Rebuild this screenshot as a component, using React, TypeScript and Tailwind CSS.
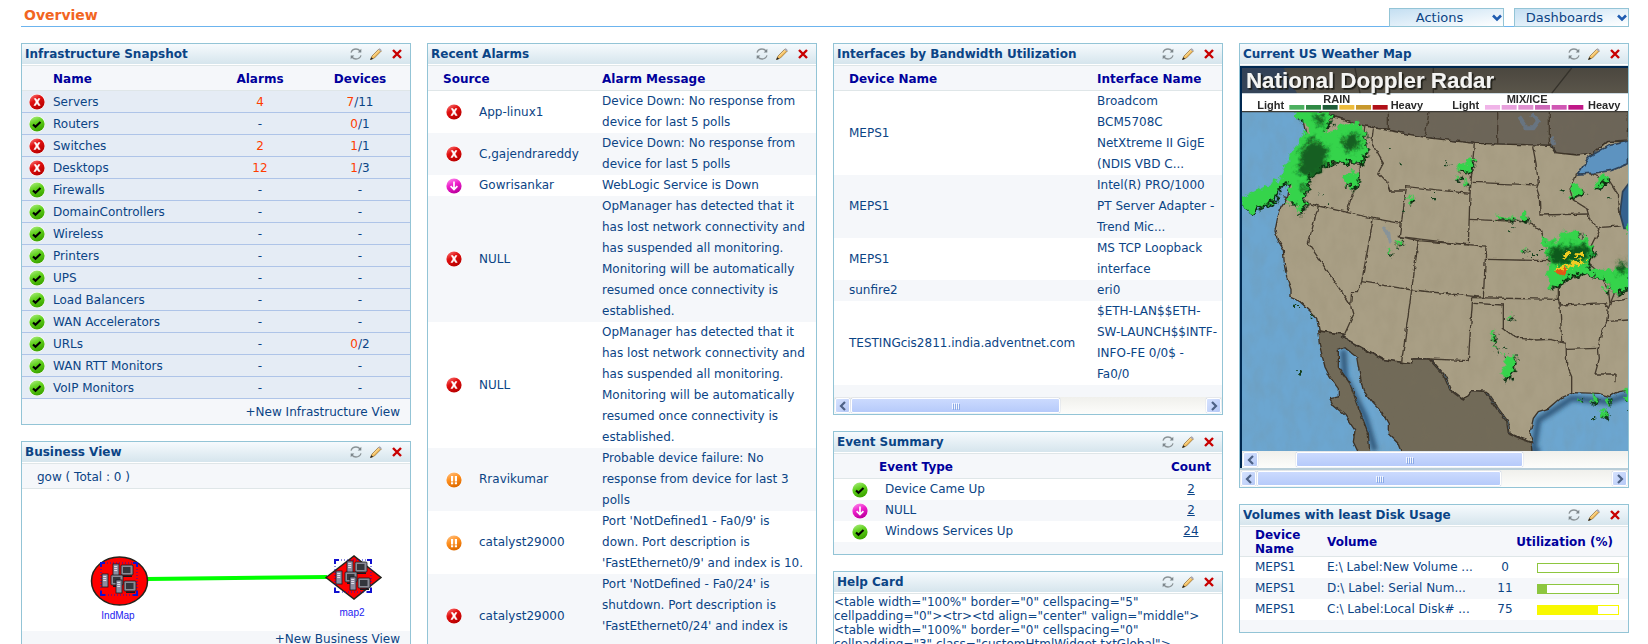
import type { ReactNode } from "react";

type Status = "critical" | "clear" | "trouble" | "attention";

const infrastructure: { name: string; status: Status; alarms?: number; down?: number; total?: number }[] = [
  { name: "Servers", status: "critical", alarms: 4, down: 7, total: 11 },
  { name: "Routers", status: "clear", down: 0, total: 1 },
  { name: "Switches", status: "critical", alarms: 2, down: 1, total: 1 },
  { name: "Desktops", status: "critical", alarms: 12, down: 1, total: 3 },
  { name: "Firewalls", status: "clear" },
  { name: "DomainControllers", status: "clear" },
  { name: "Wireless", status: "clear" },
  { name: "Printers", status: "clear" },
  { name: "UPS", status: "clear" },
  { name: "Load Balancers", status: "clear" },
  { name: "WAN Accelerators", status: "clear" },
  { name: "URLs", status: "clear", down: 0, total: 2 },
  { name: "WAN RTT Monitors", status: "clear" },
  { name: "VoIP Monitors", status: "clear" },
];

const agentLost =
  "OpManager has detected that it has lost network connectivity and has suspended all monitoring. Monitoring will be automatically resumed once connectivity is established.";

const alarms: { source: string; status: Status; message: string }[] = [
  { source: "App-linux1", status: "critical", message: "Device Down: No response from device for last 5 polls" },
  { source: "C,gajendrareddy", status: "critical", message: "Device Down: No response from device for last 5 polls" },
  { source: "Gowrisankar", status: "trouble", message: "WebLogic Service is Down" },
  { source: "NULL", status: "critical", message: agentLost },
  { source: "NULL", status: "critical", message: agentLost },
  { source: "Rravikumar", status: "attention", message: "Probable device failure: No response from device for last 3 polls" },
  {
    source: "catalyst29000",
    status: "attention",
    message: "Port 'NotDefined1 - Fa0/9' is\ndown. Port description is\n'FastEthernet0/9' and index is 10.",
  },
  {
    source: "catalyst29000",
    status: "critical",
    message: "Port 'NotDefined - Fa0/24' is\nshutdown. Port description is\n'FastEthernet0/24' and index is",
  },
];

const interfaces = [
  { device: "MEPS1", name: "Broadcom\nBCM5708C\nNetXtreme II GigE\n(NDIS VBD C..." },
  { device: "MEPS1", name: "Intel(R) PRO/1000\nPT Server Adapter -\nTrend Mic..." },
  { device: "MEPS1", name: "MS TCP Loopback\ninterface" },
  { device: "sunfire2", name: "eri0" },
  { device: "TESTINGcis2811.india.adventnet.com", name: "$ETH-LAN$$ETH-\nSW-LAUNCH$$INTF-\nINFO-FE 0/0$ -\nFa0/0" },
];

const events: { type: string; status: Status; count: number }[] = [
  { type: "Device Came Up", status: "clear", count: 2 },
  { type: "NULL", status: "trouble", count: 2 },
  { type: "Windows Services Up", status: "clear", count: 24 },
];

const volumes = [
  { device: "MEPS1", volume: "E:\\ Label:New Volume ...", used: 0 },
  { device: "MEPS1", volume: "D:\\ Label: Serial Num...", used: 11 },
  { device: "MEPS1", volume: "C:\\ Label:Local Disk# ...", used: 75 },
];

const th = "text-[12px] leading-4 font-bold text-[#00009c]";
const headRow = "h-[25px] bg-[#f5f7fa] shadow-[inset_0_-1px_0_#dfe6e8]";

function SharedDefs() {
  return (
    <svg className="absolute h-0 w-0" aria-hidden="true">
      <defs>
        <linearGradient id="critical" x1="0" y1="0" x2="0.6" y2="1">
          <stop offset="0" stopColor="#ff8a8a" />
          <stop offset="0.45" stopColor="#e01010" />
          <stop offset="1" stopColor="#b80000" />
        </linearGradient>
        <linearGradient id="clear" x1="0" y1="0" x2="0.4" y2="1">
          <stop offset="0" stopColor="#b6f08c" />
          <stop offset="0.5" stopColor="#5fd01c" />
          <stop offset="1" stopColor="#3ea800" />
        </linearGradient>
        <linearGradient id="trouble" x1="0" y1="0" x2="0.4" y2="1">
          <stop offset="0" stopColor="#ff9cf0" />
          <stop offset="0.5" stopColor="#ee22cc" />
          <stop offset="1" stopColor="#c000a0" />
        </linearGradient>
        <linearGradient id="attention" x1="0" y1="0" x2="0.4" y2="1">
          <stop offset="0" stopColor="#ffc890" />
          <stop offset="0.5" stopColor="#ff9020" />
          <stop offset="1" stopColor="#e06c00" />
        </linearGradient>
      </defs>
    </svg>
  );
}

function StatusIcon({ status }: { status: Status }) {
  return (
    <svg className="inline-block h-4 w-4 align-middle" viewBox="0 0 16 16" role="img" aria-label={status}>
      <circle cx="8" cy="8" r="8" fill="#fff" />
      <circle cx="8" cy="8" r="7.6" fill={`url(#${status})`} />
      {status === "critical" && (
        <path d="M5.3 4.6h1.6l1.2 2 1.3-2h1.500L9 7.900l2.200 3.500H9.500L8 9.200l-1.500 2.200H4.900L7.100 8z" fill="#fff" stroke="#fff" strokeWidth=".6" />
      )}
      {status === "clear" && <path d="M4 8.400 6.500 10.800l5-4.800" fill="none" stroke="#000" strokeWidth="2.1" />}
      {status === "trouble" && <path d="M8 3.600v7.600M4.600 8.200 8 11.600l3.400-3.400" fill="none" stroke="#fff" strokeWidth="1.700" />}
      {status === "attention" && (
        <path d="M5 4h2.200v5.400H5zM5 10.200h2.200v2H5zM8.800 4H11v5.400H8.800zM8.800 10.200H11v2H8.800z" fill="#fff" />
      )}
    </svg>
  );
}

function RefreshIcon() {
  return (
    <svg className="h-3 w-3" viewBox="0 0 12 12" fill="none" stroke="#8a9296" strokeWidth="1.3">
      <path d="M1 4.600C1.800 2.200 3.600 1 6 1c1.700 0 3 .6 4.200 2M11 7.400C10.200 9.800 8.400 11 6 11c-1.700 0-3-.6-4.200-2" />
      <path d="M11.300.8v3.600H7.700zM.7 11.200V7.600h3.600z" fill="#7b858a" stroke="none" />
    </svg>
  );
}

function PencilIcon() {
  return (
    <svg className="h-3 w-3" viewBox="0 0 12 12">
      <path d="M.5 11.600 2 8 9 .9l2.400 2L4.400 10z" fill="#f4bd5c" stroke="#8d6a33" strokeWidth=".7" />
      <path d="m3 8.400 6.600-6.600" stroke="#ffe6a8" strokeWidth="1" />
      <path d="M8.300 1.500 9.300.5c.6-.5 2.600 1.100 2.100 2l-.9 1z" fill="#a9a9b8" />
      <path d="M.2 11.900 1.200 9.200l2 1.600z" fill="#222" />
    </svg>
  );
}

function CloseIcon() {
  return (
    <svg className="h-2.5 w-2.5" viewBox="0 0 10 10" stroke="#c80000" strokeWidth="2.4">
      <path d="m1 1 8 8M9 1 1 9" />
    </svg>
  );
}

function Widget({ title, children }: { title: string; children: ReactNode }) {
  return (
    <section className="overflow-hidden border border-[#93c4d6] bg-white">
      <header className="flex h-[22px] items-center border-b border-[#dfe6e8] bg-linear-to-b from-[#f6fafd] to-[#d4e4ec] pr-2 pb-0.5 pl-[3px] shadow-[inset_0_-1px_0_#fff]">
        <h2 className="flex-1 truncate text-[12px] leading-[18px] font-bold text-[#0b4485]">{title}</h2>
        <button type="button" aria-label="Refresh" className="mr-2">
          <RefreshIcon />
        </button>
        <button type="button" aria-label="Edit" className="mr-2.5">
          <PencilIcon />
        </button>
        <button type="button" aria-label="Remove">
          <CloseIcon />
        </button>
      </header>
      {children}
    </section>
  );
}

function Chevron({ flip = false }: { flip?: boolean }) {
  return (
    <svg className="h-2.5 w-2" viewBox="0 0 8 10" fill="none" stroke="#4d6185" strokeWidth="2.2">
      <path d={flip ? "M2 1l4 4-4 4" : "M6 1 2 5l4 4"} />
    </svg>
  );
}

const arrowButton =
  "flex h-[15px] w-[15px] shrink-0 items-center justify-center rounded-xs border border-white bg-linear-to-br from-[#d6e2fe] to-[#b5c8f6] shadow-[0_0_1px_#8aa5dc]";

function ScrollBar({ start, size, endButton = true }: { start: number; size: number; endButton?: boolean }) {
  return (
    <div className="flex h-[17px] items-center bg-linear-to-b from-[#f0f0ec] to-[#fdfdfb] px-px">
      <button type="button" aria-label="Scroll left" className={arrowButton}>
        <Chevron />
      </button>
      <div className="mx-px flex flex-1">
        <div style={{ width: `${start}%` }} />
        <div
          className="flex h-[15px] items-center justify-center gap-px rounded-xs border border-white bg-linear-to-b from-[#cbdafe] to-[#b6cafa] shadow-[0_0_1px_#6f8fd0]"
          style={{ width: `${size}%` }}
        >
          {[0, 1, 2, 3].map((i) => (
            <span key={i} className="h-1.5 w-px bg-[#f2f6ff] shadow-[1px_1px_0_#8caae6]" />
          ))}
        </div>
      </div>
      {endButton && (
        <button type="button" aria-label="Scroll right" className={arrowButton}>
          <Chevron flip />
        </button>
      )}
    </div>
  );
}

function HeaderMenu({ label }: { label: string }) {
  return (
    <div className="relative w-[115px]">
      <select
        aria-label={label}
        className="block h-[19px] w-full appearance-none border border-[#93c4d6] bg-linear-to-br from-[#c4dff2] to-white pr-3.5 text-center text-[13px] leading-4 text-[#0b4485]"
      >
        <option>{label}</option>
      </select>
      <svg className="pointer-events-none absolute top-1.5 right-0.5 h-2 w-2.5" viewBox="0 0 10 8" fill="none" stroke="#1f5cb0" strokeWidth="2.6">
        <path d="m1 1.500 4 4 4-4" />
      </svg>
    </div>
  );
}

function InfrastructureSnapshot() {
  return (
    <Widget title="Infrastructure Snapshot">
      <table className="w-full table-fixed">
        <colgroup>
          <col className="w-[31px]" />
          <col />
          <col className="w-[100px]" />
          <col className="w-[100px]" />
        </colgroup>
        <thead>
          <tr className={headRow}>
            <th />
            <th className={`${th} text-left`}>Name</th>
            <th className={th}>Alarms</th>
            <th className={th}>Devices</th>
          </tr>
        </thead>
        <tbody>
          {infrastructure.map((row) => (
            <tr key={row.name} className="h-[22px] bg-[#e5ecf5] shadow-[inset_0_-1px_0_#aec4e8]">
              <td className="pl-[7px] leading-4">
                <StatusIcon status={row.status} />
              </td>
              <td className="pt-px">{row.name}</td>
              <td className="pt-px text-center">
                {row.alarms ? <span className="text-[#ff3c00]">{row.alarms}</span> : "-"}
              </td>
              <td className="pt-px text-center">
                {row.total ? (
                  <>
                    <span className="text-[#ff3c00]">{row.down}</span>/{row.total}
                  </>
                ) : (
                  "-"
                )}
              </td>
            </tr>
          ))}
        </tbody>
      </table>
      <div className="bg-[#f5f7fa] pt-[3px] pr-2.5 pb-px text-right">
        <a href="#new-infrastructure-view">+New Infrastructure View</a>
      </div>
    </Widget>
  );
}

function Tower({ x, y }: { x: number; y: number }) {
  return (
    <g transform={`translate(${x} ${y})`}>
      <rect width="6" height="13" fill="#8d8da0" stroke="#1a1a22" strokeWidth=".8" />
      <path d="M1.200 2.500h3M1.200 4.500h3M1.200 6.500h3" stroke="#e8e8f2" strokeWidth=".9" />
    </g>
  );
}

function Monitor({ x, y }: { x: number; y: number }) {
  return (
    <g transform={`translate(${x} ${y})`}>
      <rect width="12" height="10" rx="1" fill="#8b8b96" stroke="#17171d" strokeWidth=".8" />
      <rect x="2" y="2" width="7.500" height="6" fill="#33363c" />
      <path d="M2 11.200h9" stroke="#17171d" strokeWidth="1.600" />
    </g>
  );
}

function HostCluster({ x, y }: { x: number; y: number }) {
  return (
    <g transform={`translate(${x} ${y})`}>
      <rect x="1" y="1" width="36" height="32" fill="none" stroke="#1717c8" strokeDasharray="1 2" />
      <path d="M1 5V1h4M33 1h4v4M37 29v4h-4M5 33H1v-4" fill="none" stroke="#1010d0" strokeWidth="2" />
      <Tower x={13} y={2} />
      <Monitor x={21} y={3} />
      <Tower x={2} y={12} />
      <Monitor x={11} y={13} />
      <Tower x={16} y={18} />
      <Monitor x={24} y={19} />
    </g>
  );
}

function BusinessView() {
  return (
    <Widget title="Business View">
      <p className="border-b border-[#dfe6e8] bg-[#f5f7fa] pt-[5px] pb-[3px] pl-[15px] leading-4">gow ( Total : 0 )</p>
      <svg className="block h-[142px] w-full" viewBox="22 489 388 142" fontFamily="Liberation Sans, Arial, sans-serif" fontSize="10">
        <path d="M147 579 327 577" stroke="#00ff00" strokeWidth="4" />
        <ellipse cx="119.500" cy="581" rx="28" ry="24" fill="#f00" stroke="#26221c" strokeWidth="1.500" />
        <HostCluster x={100} y={562} />
        <path d="m326 577.500 28-21.500 27 21.500-27 21.500z" fill="#f00" stroke="#26221c" strokeWidth="1.500" />
        <HostCluster x={334} y={559} />
        <text x="118" y="619" textAnchor="middle" fill="#1a1af0">
          IndMap
        </text>
        <text x="352" y="616" textAnchor="middle" fill="#1a1af0">
          map2
        </text>
      </svg>
      <div className="bg-[#f5f7fa] pr-2.5 pb-4 text-right leading-4">
        <a href="#new-business-view">+New Business View</a>
      </div>
    </Widget>
  );
}

function RecentAlarms() {
  return (
    <Widget title="Recent Alarms">
      <table className="w-full table-fixed">
        <colgroup>
          <col className="w-[51px]" />
          <col className="w-[123px]" />
          <col />
        </colgroup>
        <thead>
          <tr className={headRow}>
            <th colSpan={2} className={`${th} pl-[15px] text-left`}>
              Source
            </th>
            <th className={`${th} text-left`}>Alarm Message</th>
          </tr>
        </thead>
        <tbody>
          {alarms.map((alarm, i) => (
            <tr key={i} className="last:h-[84px] even:bg-[#f5f7fa]">
              <td className="text-center leading-4">
                <StatusIcon status={alarm.status} />
              </td>
              <td>{alarm.source}</td>
              <td className="align-top whitespace-pre-line">{alarm.message}</td>
            </tr>
          ))}
        </tbody>
      </table>
    </Widget>
  );
}

function BandwidthInterfaces() {
  return (
    <Widget title="Interfaces by Bandwidth Utilization">
      <table className="w-full table-fixed">
        <colgroup>
          <col className="w-[263px]" />
          <col />
        </colgroup>
        <thead>
          <tr className={headRow}>
            <th className={`${th} pl-[15px] text-left`}>Device Name</th>
            <th className={`${th} text-left whitespace-nowrap`}>Interface Name</th>
          </tr>
        </thead>
        <tbody>
          {interfaces.map((row, i) => (
            <tr key={i} className="even:bg-[#f5f7fa]">
              <td className="pl-[15px]">{row.device}</td>
              <td className="whitespace-pre">{row.name}</td>
            </tr>
          ))}
        </tbody>
      </table>
      <div className="h-3 bg-[#f5f7fa]" />
      <ScrollBar start={0} size={59} />
    </Widget>
  );
}

function EventSummary() {
  return (
    <Widget title="Event Summary">
      <table className="w-full table-fixed">
        <colgroup>
          <col className="w-[45px]" />
          <col />
          <col className="w-[62px]" />
        </colgroup>
        <thead>
          <tr className={headRow}>
            <th />
            <th className={`${th} text-left`}>Event Type</th>
            <th className={th}>Count</th>
          </tr>
        </thead>
        <tbody>
          {events.map((event) => (
            <tr key={event.type} className="even:bg-[#f5f7fa]">
              <td className="pl-[18px] leading-4">
                <StatusIcon status={event.status} />
              </td>
              <td className="pl-1.5">{event.type}</td>
              <td className="text-center">
                <a href="#events" className="underline">
                  {event.count}
                </a>
              </td>
            </tr>
          ))}
        </tbody>
      </table>
      <div className="h-3 bg-[#f5f7fa]" />
    </Widget>
  );
}

function HelpCard() {
  return (
    <Widget title="Help Card">
      <p className="pt-px leading-[14px] whitespace-pre">
        {`<table width="100%" border="0" cellspacing="5"
cellpadding="0"><tr><td align="center" valign="middle">
<table width="100%" border="0" cellspacing="0"
cellpadding="3" class="customHtmlWidget txtGlobal">`}
      </p>
    </Widget>
  );
}

const radarEchoes = [
  "M190 340h100l5 35 -25 15 -40 10 -15-30-25-5z",
  "M222 395l45-12 25 25 25-25 55-10 22 25 8 60-18 38-68-5-45 8-40 35-15 55-2 30-45-2-5-35 8-22-14-6-22 20-12 40-40 8-25 28-30-20-10-30 55-22 40-22 25-10 15-35 30-60z",
  "M330 540l28-20 20 14-4 22-18 22-6-18-16 0zM195 612l20 5-12 30-8-5z",
  "M670 505l50-20 5 10-20 30-28-4zM660 540l20-5-4 12zM690 545l14 5-8 16z",
  "M1012 566l18-8 25 22-18 8-25 10zM1085 565l18-32 22 6-12 22-26 10z",
  "M862 655l12-10 12 18-20 8zM790 657l60 3v6l-60-3zM522 600l20-5 2 8-15 14z",
  "M925 720l35 15 20-27 40-6 60 38-5 45-15 25 50 8 80-10 0 60-40 22-30-40-60-22-50 5-30 25-30 18-10-45 12-30z",
  "M980 705l20-5 50 8-30 12zM1105 872l25 2-15 12zM1175 690l20-30v60z",
  "M860 760l20-8-8 18zM485 730l24 0-12 12zM458 758l16 0-6 12z",
  "M775 1015l10-22 3 20-8 26zM783 1040l8 20-10-8zM805 1070l10-5-2 10zM822 960l14-6-4 12z",
  "M820 1085l22-15 5 22-15 40-15 15-15-4 8-28z",
  "M1035 1195l12 8-3 14zM1072 1215l12-25 5 18zM1118 1212l10-12 5 28zM1100 1240l18-6 8 14-14 10zM1170 1180l20-10 5 35-12 6z",
];

const stateLines = [
  "M270 478l90 10 28 2M405 378l-10 62-5 70-40 127",
  "M430 388l-5 42 35 60-15 28 25 27 10 28 45 0",
  "M160 590l105 28 85 19 80 18 83 15",
  "M265 618l-30 112 127 185 8 30-25 55",
  "M430 655l-35 190-10 30-20 0-3 40",
  "M530 560l-22 150 207 25 5-155z",
  "M733 430l-13 150M728 547l192 8M717 658l163 7 30 10 25 20 18 55 8 32",
  "M908 438l10 52 7 60-5 15 8 25 2 55 145-3",
  "M508 710l57 12-20 148-150-25M565 722l203 16-8 154-215-22",
  "M768 778l192 4 25 30v86M728 893l257 5 5 17 5 110M545 870l-30 215",
  "M728 893l-13 189-118-5M730 910l90 5v70l25 20 25 10 50 5 40-2 48 12",
  "M990 915l135-7 10 17-5 40-15 35-10 45 3 30-13 47h60v28",
  "M1008 1030l2 65 15 35v48M1008 1048l95-3M1130 965l65-5M1145 905l50-8",
  "M1040 520l-20 50 10 30 40 25 10 35 30 30-25 50-10 50 35 30 25 50 5 40",
  "M1080 520l60 25 25 40 5 60M1110 682l62-4M1135 870l60-40M1135 925l20-50",
];

function WeatherMap() {
  return (
    <svg className="block h-[383px] w-full" viewBox="36 204 1158 1149" preserveAspectRatio="xMinYMin slice" role="img" aria-label="National Doppler Radar">
      <defs>
        <filter id="ragged" x="-5%" y="-5%" width="110%" height="110%">
          <feTurbulence type="fractalNoise" baseFrequency="0.06" numOctaves="3" seed="7" />
          <feDisplacementMap in="SourceGraphic" scale="36" xChannelSelector="R" yChannelSelector="G" />
        </filter>
        <filter id="coast" x="-5%" y="-5%" width="110%" height="110%">
          <feTurbulence type="fractalNoise" baseFrequency="0.05" numOctaves="2" seed="3" />
          <feDisplacementMap in="SourceGraphic" scale="12" xChannelSelector="R" yChannelSelector="G" />
        </filter>
        <filter id="terrain" x="0" y="0" width="100%" height="100%">
          <feTurbulence type="fractalNoise" baseFrequency="0.03 0.015" numOctaves="3" seed="11" />
          <feColorMatrix values="0 0 0 0 0.2  0 0 0 0 0.17  0 0 0 0 0.1  0.9 0 0 0 -0.3" />
          <feComposite operator="in" in2="SourceGraphic" />
        </filter>
        <filter id="soft">
          <feGaussianBlur stdDeviation="7" />
        </filter>
        <filter id="titleShadow" x="-2%" y="-10%" width="104%" height="130%">
          <feDropShadow dx="5" dy="5" stdDeviation="1" floodColor="#1c1a17" />
        </filter>
        <linearGradient id="banner" x1="0" y1="0" x2="0" y2="1">
          <stop offset="0" stopColor="#4b473f" />
          <stop offset="1" stopColor="#5a554a" />
        </linearGradient>
      </defs>
      <rect x="36" y="204" width="1158" height="1149" fill="#6ca6d0" />

      {/* drop shadow the land casts on the gulfs */}
      <path
        d="M1195 1185l-60 20-110-10-60 40-40 25-15 92h20M340 1050l5 80 60 120 30 102"
        fill="none"
        stroke="#24476a"
        strokeWidth="18"
        opacity=".8"
        filter="url(#soft)"
      />

      <g filter="url(#coast)" stroke="#3b3228" strokeWidth="4">
        <path d="M213 320l87 26 105 32 180 34 148 18 70 4 162 2 15 24 60 5 50-5 40-35 65-5V320z" fill="#6c6558" />
        <path
          d="M215 345l80 0 110 33 180 34 148 18 227 6 15 22 65 7 50-5 40-35 70 0v745l-35 5-25 15-35-10-75-2-40 17-35 30-30 10-15 20-10 45 8 28-33-13-35-15-5-35-30-40-35-51-40-2-25 28-40-30-20-45-43-48h-52v15l-90-14-120-66 5-9-77-10-8-38-20-22-30-28-27-12v-25l-13-35-7-40-3-45-15-25-10-30 8-40 10-30 20-30 5-30 20-60 20-60 10-40z"
          fill="#a99f85"
        />
        <path
          d="M263 993l77 10-5 9 120 66 90 14v-15h52l43 48 20 45 40 30 25-28 40 2 35 51 30 40 5 35 35 15 33 13 5 40H520l-15-37-30-30v-30l-20-35-25-25-30-40-5-20-10-50-5-30-35-28-20 8v50l35 50 25 70 30 80 5 67h-30l-20-42 5-35-30-45-35-30-10-20 25-5v-25l-25-35-15-30-15-60z"
          fill="#716a58"
        />
      </g>
      <rect x="36" y="335" width="1158" height="1018" filter="url(#terrain)" opacity=".2" />

      <path d="M1045 522l30-50 60-35 60-14v68l-50 20-50 8z" fill="#5d93c0" stroke="#2e4258" strokeWidth="5" filter="url(#coast)" />
      <path d="M1200 545l-22 30-8 65 12 45h18z" fill="#34628f" stroke="#2e4258" strokeWidth="5" />
      <path d="M868 350l20 30M905 345l20 20-15 20-30 0M965 410l8 25M460 680l15 20 5 30" fill="none" stroke="#6488b4" strokeWidth="12" opacity=".45" filter="url(#coast)" />

      <g fill="none" stroke="#453b2e" strokeWidth="4" filter="url(#coast)">
        <path d="M475 335v55M597 335l-12 76M803 335v98M958 335v100" />
        {stateLines.map((d) => (
          <path key={d} d={d} />
        ))}
      </g>

      <g filter="url(#ragged)" transform="translate(9 -8)">
        <g fill="#0a2e10" transform="translate(5 7)">
          {radarEchoes.map((d) => (
            <path key={d} d={d} />
          ))}
        </g>
        <g fill="#35d44c">
          {radarEchoes.map((d) => (
            <path key={d} d={d} />
          ))}
        </g>
        <g filter="url(#soft)">
          <path d="M205 460l30-40 50 35-10 50-40 35-40-10zM330 420l40-15 15 35-30 25-25-10zM240 350l30 5 0 30-20-5zM200 560l15 0 5 25-15-5z" fill="#0e4a1a" opacity=".85" />
          <path d="M950 750l110-8 15 28-20 20-80 15-25-15zM1150 800l30-10 0 30-20 15z" fill="#0c5a1a" />
        </g>
        <path d="M990 770l15-8 10 12-20 8zM1025 775l25-10 0 12zM970 812l30-8 35-15 30 2-30 16-30 5-25 12z" fill="#f0cc20" />
        <path d="M972 820l28-8 2 10-22 12z" fill="#e05a14" />
        <path
          d="M470 455h6v6h-6zM500 495h10v6h-10zM640 492h6v6h-6zM505 638h8v8h-8zM600 590h6v16h-6zM285 615h6v6h-6zM258 585h6v6h-6zM985 575h7v7h-7zM1125 600h10v6h-10zM920 755h8v6h-8zM900 768h6v8h-6zM835 690h6v6h-6zM815 1050h6v6h-6zM180 925h18v7h-18zM225 955h10v8h-10zM195 1125h8v10h-8zM1080 1262h7v7h-7zM1185 1235h8v14h-8z"
          fill="#12401c"
        />
      </g>

      <rect x="36" y="204" width="1158" height="76" fill="url(#banner)" />
      <path d="M36 204h125l40 76H36z" fill="#2c405c" opacity=".8" />
      <path d="M375 204l15 76M610 204v76M1025 204l-60 76" stroke="#35322b" strokeWidth="4" />
      <rect x="36" y="280" width="1158" height="53" fill="#fff" />
      <path d="M36 335h1158" stroke="#3c3a34" strokeWidth="4" />
      <g fontFamily="Liberation Sans, Arial, sans-serif" fontWeight="bold">
        <text x="48" y="264" fontSize="67" fill="#f4f4f2" filter="url(#titleShadow)">
          National Doppler Radar
        </text>
        <g fontSize="33" fill="#2a2a2a">
          <text x="82" y="327">
            Light
          </text>
          <text x="280" y="310">
            RAIN
          </text>
          <text x="482" y="327">
            Heavy
          </text>
          <text x="667" y="327">
            Light
          </text>
          <text x="830" y="310">
            MIX/ICE
          </text>
          <text x="1074" y="327">
            Heavy
          </text>
        </g>
      </g>
      <g strokeWidth="14">
        <path d="M178 322h45" stroke="#4cb060" />
        <path d="M228 322h45" stroke="#2f8a44" />
        <path d="M278 322h45" stroke="#1f5c38" />
        <path d="M328 322h45" stroke="#eebc3c" />
        <path d="M378 322h45" stroke="#c8982c" />
        <path d="M428 322h45" stroke="#b01018" />
        <path d="M765 322h45" stroke="#f0b4e8" />
        <path d="M815 322h45" stroke="#e8a0dc" />
        <path d="M865 322h45" stroke="#e090d0" />
        <path d="M915 322h45" stroke="#cc68b8" />
        <path d="M965 322h45" stroke="#d058b4" />
        <path d="M1015 322h45" stroke="#c01888" />
      </g>
    </svg>
  );
}

function WeatherWidget() {
  return (
    <Widget title="Current US Weather Map">
      <div className="border-t-2 border-l-2 border-[#002850]">
        <WeatherMap />
        <ScrollBar start={10} size={62} endButton={false} />
      </div>
      <div className="h-0.5 bg-[#b8cdd8]" />
      <ScrollBar start={0} size={69} />
    </Widget>
  );
}

function DiskVolumes() {
  return (
    <Widget title="Volumes with least Disk Usage">
      <table className="w-full table-fixed">
        <colgroup>
          <col className="w-[87px]" />
          <col />
          <col className="w-[34px]" />
          <col className="w-[106px]" />
        </colgroup>
        <thead>
          <tr className="h-[30px] bg-[#f5f7fa] shadow-[inset_0_-1px_0_#dfe6e8]">
            <th className="pl-[15px] text-left text-[12px] leading-[14px] font-bold text-[#00009c]">
              Device
              <br />
              Name
            </th>
            <th className={`${th} text-left`}>Volume</th>
            <th colSpan={2} className={`${th} pr-[15px] text-right whitespace-nowrap`}>
              Utilization (%)
            </th>
          </tr>
        </thead>
        <tbody>
          {volumes.map((row) => (
            <tr key={row.volume} className="even:bg-[#f5f7fa]">
              <td className="pl-[15px]">{row.device}</td>
              <td className="whitespace-nowrap">{row.volume}</td>
              <td className="text-center">{row.used}</td>
              <td className="pl-[15px]">
                <div className={`h-[10px] w-[82px] border bg-white ${row.used > 50 ? "border-[#f8f800]" : "border-[#8dc63f]"}`}>
                  <div className={`h-full ${row.used > 50 ? "bg-[#f8f800]" : "bg-[#8dc63f]"}`} style={{ width: `${row.used}%` }} />
                </div>
              </td>
            </tr>
          ))}
        </tbody>
      </table>
      <div className="h-3 bg-[#f5f7fa]" />
    </Widget>
  );
}

export default function App() {
  return (
    <div className="h-screen overflow-hidden bg-white pr-[19px] pl-[21px] font-['DejaVu_Sans',sans-serif] text-[12px] leading-[21px] text-[#0b4485]">
      <SharedDefs />
      <header className="flex h-[27px] items-end border-b border-[#6cb4ee]">
        <h1 className="flex-1 self-center pt-1 pl-[3px] text-[14px] leading-5 font-bold text-[#f26522]">Overview</h1>
        <div className="-mb-px flex gap-2.5">
          <HeaderMenu label="Actions" />
          <HeaderMenu label="Dashboards" />
        </div>
      </header>
      <main className="grid grid-cols-4 items-start gap-4 pt-4">
        <div className="flex min-w-0 flex-col gap-4">
          <InfrastructureSnapshot />
          <BusinessView />
        </div>
        <div className="min-w-0">
          <RecentAlarms />
        </div>
        <div className="flex min-w-0 flex-col gap-4">
          <BandwidthInterfaces />
          <EventSummary />
          <HelpCard />
        </div>
        <div className="flex min-w-0 flex-col gap-4">
          <WeatherWidget />
          <DiskVolumes />
        </div>
      </main>
    </div>
  );
}
